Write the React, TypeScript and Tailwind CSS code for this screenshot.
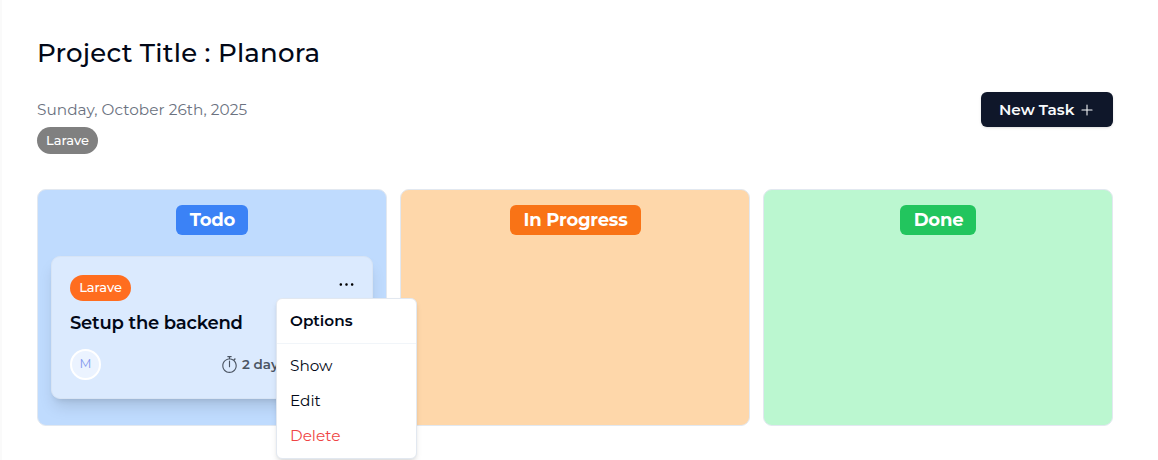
import { RxDotsHorizontal, RxPlus, RxStopwatch } from "react-icons/rx";
import type { ReactNode } from "react";

type ColumnProps = {
  label: ReactNode;
  background: string;
  children?: ReactNode;
};

function Column({ label, background, children }: ColumnProps) {
  return (
    <section className={`h-[237px] min-w-0 rounded-[9px] border border-[#e2e8f0] px-[13px] pt-[15px] ${background}`}>
      <div className="flex justify-center">{label}</div>
      {children}
    </section>
  );
}

function TaskMenu() {
  return (
    <div className="absolute left-[224px] top-[41px] z-10 h-[161px] w-[141px] rounded-[6px] border border-[#e2e8f0] bg-white text-[15.3px] text-[#020817] shadow-md">
      <div className="flex h-[45px] items-center border-b border-[#f1f5f9] pl-[13px] font-semibold">
        <span className="whitespace-nowrap">Options</span>
      </div>
      <div className="flex flex-col pl-[13px] pt-[5px]">
        <button className="h-[35px] text-left">Show</button>
        <button className="h-[35px] text-left">Edit</button>
        <button className="h-[35px] text-left text-[#ef4444]">Delete</button>
      </div>
    </div>
  );
}

function TaskCard() {
  return (
    <article className="relative mt-[21px] h-[143px] rounded-[9px] border border-[#d7e4f5] bg-[#dbeafe] px-[18px] pt-[18px] shadow-[0_10px_16px_-3px_rgb(0_0_0/0.13),0_4px_6px_-4px_rgb(0_0_0/0.13)]">
      <div className="flex items-start justify-between">
        <span className="flex h-[26px] w-[61px] items-center justify-center rounded-full bg-[#ff6d1f] text-[13px] font-medium tracking-[-0.05px] text-white">
          Larave
        </span>
        <RxDotsHorizontal className="-mr-[0.5px] mt-[1px] size-[17px] text-black" />
      </div>
      <h2 className="mt-[9px] whitespace-nowrap text-[18px] font-semibold leading-[27px] tracking-[-0.21px] text-[#020817]">Setup the backend</h2>
      <div className="mt-[12px] flex items-center">
        <span className="flex size-[31px] items-center justify-center rounded-full border-2 border-white bg-[#ebf3ff] text-[12.5px] text-[#7f98ee]">M</span>
        <div className="ml-[120px] flex items-center gap-[4px] whitespace-nowrap text-[13.5px] font-semibold text-[#4b5563]">
          <RxStopwatch className="size-[17px]" />
          <span>2 days</span>
        </div>
      </div>
      <TaskMenu />
    </article>
  );
}

export default function App() {
  return (
    <main className="h-[460px] overflow-hidden border-l-2 border-[#fafafa] bg-white pl-[35px] pr-[45px] pt-[36px] font-['Montserrat','Inter',sans-serif] text-[#020817]">
      <h1 className="h-[34px] whitespace-nowrap text-[26px] font-medium leading-[34px] tracking-[0.22px]">Project Title : Planora</h1>
      <div className="mt-[22px] flex justify-between">
        <div>
          <p className="h-[35px] whitespace-nowrap text-[15.3px] leading-[36px] tracking-[0.05px] text-[#6b7280]">Sunday, October 26th, 2025</p>
          <span className="flex h-[27px] w-[61px] items-center justify-center rounded-full bg-[#808080] text-[13px] font-medium text-white">Larave</span>
        </div>
        <button className="flex h-[35px] w-[132px] items-center gap-[5px] whitespace-nowrap rounded-[6px] bg-[#0f172a] pl-[18px] pt-px text-[15.3px] font-semibold tracking-[-0.05px] text-slate-50 shadow">
          New Task
          <RxPlus className="mb-px size-[16px]" />
        </button>
      </div>
      <div className="mt-[35px] grid grid-cols-3 gap-[13px]">
        <Column
          background="bg-[#bfdbfe]"
          label={<span className="flex h-[30px] w-[72px] items-center justify-center rounded-[6px] bg-[#3b82f6] pl-px text-[18px] font-bold tracking-[-0.2px] text-white">Todo</span>}
        >
          <TaskCard />
        </Column>
        <Column
          background="bg-[#fed7aa]"
          label={<span className="flex h-[30px] w-[131px] items-center justify-center whitespace-nowrap rounded-[6px] bg-[#f97316] pl-px text-[18px] font-bold tracking-[-0.22px] text-white">In Progress</span>}
        />
        <Column
          background="bg-[#bbf7d0]"
          label={<span className="flex h-[30px] w-[76px] items-center justify-center rounded-[6px] bg-[#22c55e] pl-px text-[18px] font-bold tracking-[-0.2px] text-white">Done</span>}
        />
      </div>
    </main>
  );
}
